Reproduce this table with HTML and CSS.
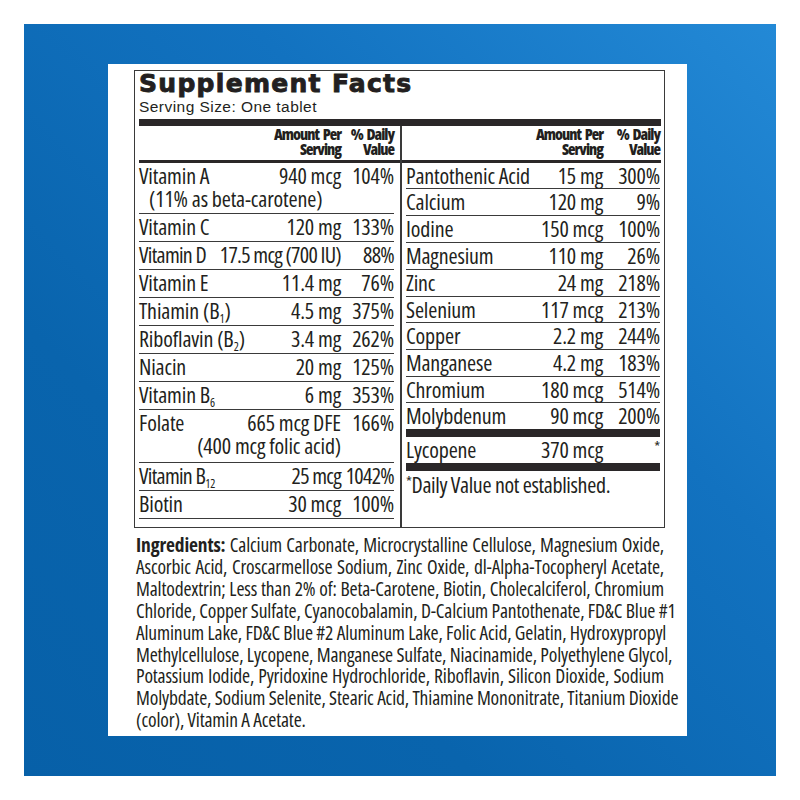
FILE: index.html
```html
<!DOCTYPE html>
<html lang="en">
<head>
<meta charset="utf-8">
<title>Supplement Facts</title>
<link rel="stylesheet" href="styles.css">
</head>
<body>
<div class="page">
  <div class="blue">
    <div class="panel">
      <div class="facts">
        <h1 class="title">Supplement Facts</h1>
        <div class="serving">Serving Size: One tablet</div>
        <div class="bar"></div>
        <div class="cols">
          <div class="col col-left">
            <div class="head"><span></span><span class="h-amt">Amount Per<br>Serving</span><span class="h-dv">% Daily<br>Value</span></div>
            <div class="row two vita">
              <div class="line"><span class="nm">Vitamin A</span><span class="amt">940 mcg</span><span class="dv">104%</span></div>
              <div class="sub indent">(11% as beta-carotene)</div>
            </div>
            <div class="row"><div class="line"><span class="nm">Vitamin C</span><span class="amt">120 mg</span><span class="dv">133%</span></div></div>
            <div class="row squeeze"><div class="line"><span class="nm">Vitamin D</span><span class="amt">17.5 mcg (700 IU)</span><span class="dv">88%</span></div></div>
            <div class="row"><div class="line"><span class="nm">Vitamin E</span><span class="amt">11.4 mg</span><span class="dv">76%</span></div></div>
            <div class="row"><div class="line"><span class="nm">Thiamin (B<sub>1</sub>)</span><span class="amt">4.5 mg</span><span class="dv">375%</span></div></div>
            <div class="row"><div class="line"><span class="nm">Riboflavin (B<sub>2</sub>)</span><span class="amt">3.4 mg</span><span class="dv">262%</span></div></div>
            <div class="row"><div class="line"><span class="nm">Niacin</span><span class="amt">20 mg</span><span class="dv">125%</span></div></div>
            <div class="row"><div class="line"><span class="nm">Vitamin B<sub>6</sub></span><span class="amt">6 mg</span><span class="dv">353%</span></div></div>
            <div class="row two folate">
              <div class="line"><span class="nm">Folate</span><span class="amt">665 mcg DFE</span><span class="dv">166%</span></div>
              <div class="line"><span></span><span class="amt">(400 mcg folic acid)</span><span></span></div>
            </div>
            <div class="row squeeze"><div class="line"><span class="nm">Vitamin B<sub>12</sub></span><span class="amt">25 mcg</span><span class="dv">1042%</span></div></div>
            <div class="row"><div class="line"><span class="nm">Biotin</span><span class="amt">30 mcg</span><span class="dv">100%</span></div></div>
          </div>
          <div class="col col-right">
            <div class="head"><span></span><span class="h-amt">Amount Per<br>Serving</span><span class="h-dv">% Daily<br>Value</span></div>
            <div class="row first"><div class="line"><span class="nm">Pantothenic Acid</span><span class="amt">15 mg</span><span class="dv">300%</span></div></div>
            <div class="row"><div class="line"><span class="nm">Calcium</span><span class="amt">120 mg</span><span class="dv">9%</span></div></div>
            <div class="row"><div class="line"><span class="nm">Iodine</span><span class="amt">150 mcg</span><span class="dv">100%</span></div></div>
            <div class="row"><div class="line"><span class="nm">Magnesium</span><span class="amt">110 mg</span><span class="dv">26%</span></div></div>
            <div class="row"><div class="line"><span class="nm">Zinc</span><span class="amt">24 mg</span><span class="dv">218%</span></div></div>
            <div class="row tight"><div class="line"><span class="nm">Selenium</span><span class="amt">117 mcg</span><span class="dv">213%</span></div></div>
            <div class="row"><div class="line"><span class="nm">Copper</span><span class="amt">2.2 mg</span><span class="dv">244%</span></div></div>
            <div class="row"><div class="line"><span class="nm">Manganese</span><span class="amt">4.2 mg</span><span class="dv">183%</span></div></div>
            <div class="row tight"><div class="line"><span class="nm">Chromium</span><span class="amt">180 mcg</span><span class="dv">514%</span></div></div>
            <div class="row last"><div class="line"><span class="nm">Molybdenum</span><span class="amt">90 mcg</span><span class="dv">200%</span></div></div>
            <div class="tbar"></div>
            <div class="row last"><div class="line"><span class="nm">Lycopene</span><span class="amt">370 mcg</span><span class="dv"><sup class="ast">*</sup></span></div></div>
            <div class="tbar"></div>
            <div class="note"><sup class="ast">*</sup>Daily Value not established.</div>
          </div>
        </div>
      </div>
      <div class="ingredients">
        <div class="ln"><b>Ingredients:</b> Calcium Carbonate, Microcrystalline Cellulose, Magnesium Oxide,</div>
        <div class="ln">Ascorbic Acid, Croscarmellose Sodium, Zinc Oxide, dl-Alpha-Tocopheryl Acetate,</div>
        <div class="ln">Maltodextrin; Less than 2% of: Beta-Carotene, Biotin, Cholecalciferol, Chromium</div>
        <div class="ln">Chloride, Copper Sulfate, Cyanocobalamin, D-Calcium Pantothenate, FD&amp;C Blue #1</div>
        <div class="ln">Aluminum Lake, FD&amp;C Blue #2 Aluminum Lake, Folic Acid, Gelatin, Hydroxypropyl</div>
        <div class="ln">Methylcellulose, Lycopene, Manganese Sulfate, Niacinamide, Polyethylene Glycol,</div>
        <div class="ln">Potassium Iodide, Pyridoxine Hydrochloride, Riboflavin, Silicon Dioxide, Sodium</div>
        <div class="ln">Molybdate, Sodium Selenite, Stearic Acid, Thiamine Mononitrate, Titanium Dioxide</div>
        <div class="ln end">(color), Vitamin A Acetate.</div>
      </div>
    </div>
  </div>
</div>
</body>
</html>
```
FILE: styles.css
```css
html, body {
  margin: 0;
  padding: 0;
  background: #ffffff;
}

.page {
  width: 800px;
  height: 800px;
  padding: 24px;
  box-sizing: border-box;
  background: #ffffff;
}

.blue {
  height: 752px;
  box-sizing: border-box;
  padding: 40px 89px 40px 84px;
  background: linear-gradient(to bottom left, #2389d6 0%, #1272c0 35%, #0964ad 70%, #0760a8 100%);
}

.panel {
  height: 672px;
  box-sizing: border-box;
  padding: 6px 22px 0 26px;
  background: #ffffff;
  color: #231f20;
  font-family: "Open Sans", "Liberation Sans", sans-serif;
  font-stretch: 75%;
}

.facts {
  border: 1px solid #3a3a3a;
  padding: 0 3px 0 4px;
}

.title {
  margin: 0;
  font-family: "DejaVu Sans", "Liberation Sans", sans-serif;
  font-stretch: normal;
  font-weight: 900;
  font-size: 25px;
  line-height: 26px;
  letter-spacing: 1.3px;
  -webkit-text-stroke: 0.9px #231f20;
}

.serving {
  margin-top: 1px;
  font-family: "Liberation Sans", Arial, sans-serif;
  font-stretch: normal;
  font-size: 15.5px;
  line-height: 18px;
  letter-spacing: 0.45px;
}

.bar {
  margin-top: 3px;
  height: 7px;
  background: #2a2728;
}

.cols {
  display: grid;
  grid-template-columns: 261px 1fr;
}

.col-left {
  padding-bottom: 8px;
}

.col-right {
  border-left: 2px solid #3a3a3a;
}

.head {
  display: grid;
  font-weight: 800;
  font-size: 15.5px;
  line-height: 15px;
  letter-spacing: -1px;
  word-spacing: 2px;
  text-align: right;
  border-bottom: 3px solid #2a2728;
  padding-top: 1px;
  padding-bottom: 3px;
}

.col-left .head {
  grid-template-columns: 1fr auto 53px;
  padding-right: 6px;
}

.col-right .head {
  grid-template-columns: 1fr auto 57px;
  padding-left: 4px;
  padding-right: 1px;
}

.row {
  border-bottom: 1px solid #3a3a3a;
  font-size: 22px;
  letter-spacing: -0.15px;
}

.row.squeeze {
  letter-spacing: -0.7px;
}

.col-left .row {
  margin-right: 6px;
  padding-bottom: 3px;
}

.col-right .row {
  margin-left: 4px;
  margin-right: 1px;
  padding-bottom: 2px;
}

.col-right .row.first {
  padding-bottom: 1px;
}

.col-right .row.tight {
  padding-bottom: 1px;
}

.col-right .row.last {
  border-bottom: 0;
  padding-bottom: 2px;
}

.col-left .row.vita {
  padding-bottom: 4px;
}

.col-left .row.folate {
  padding-bottom: 6px;
}

.line {
  display: grid;
  line-height: 24px;
  white-space: nowrap;
}

.col-left .line {
  grid-template-columns: 1fr auto 53px;
}

.col-right .line {
  grid-template-columns: 1fr auto 57px;
}

.two .line + .line,
.two .sub {
  line-height: 22px;
}

.sub {
  white-space: nowrap;
}

.indent {
  padding-left: 10px;
}

.amt,
.dv {
  text-align: right;
}

sub {
  font-size: 12px;
  line-height: 0;
  vertical-align: -4px;
  letter-spacing: 0;
}

.ast {
  font-size: 15px;
  line-height: 0;
  vertical-align: 6px;
}

.tbar {
  height: 8px;
  margin: 0 1px 0 4px;
  background: #2a2728;
}

.note {
  margin-left: 4px;
  font-size: 22px;
  line-height: 26px;
  letter-spacing: -0.35px;
  white-space: nowrap;
}

.ingredients {
  margin: 6px 1px 0 2px;
  font-size: 19.5px;
  line-height: 21.9px;
  letter-spacing: -0.15px;
}

.ingredients b {
  font-weight: 700;
}

.ln {
  text-align: justify;
  text-align-last: justify;
  white-space: nowrap;
}

.ln.end {
  text-align-last: left;
}
```
